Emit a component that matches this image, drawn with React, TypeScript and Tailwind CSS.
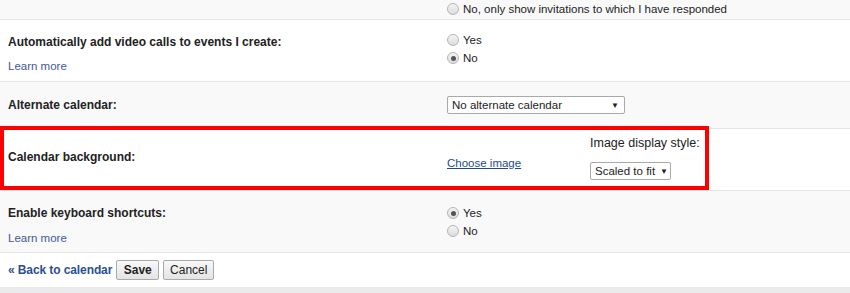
import React from "react";

// Radio dot drawn with spans so it matches the old-Chrome grey radios.
const Radio = ({ checked, label }: { checked?: boolean; label: string }) => (
  <div className="flex items-center h-[18px]">
    <span className="relative flex items-center justify-center w-[12px] h-[12px] rounded-full border border-[#b5b5b5] bg-gradient-to-b from-[#f4f4f4] to-[#dcdcdc] mr-[4px]">
      {checked && <span className="w-[5px] h-[5px] rounded-full bg-[#555]" />}
    </span>
    <span className="whitespace-nowrap">{label}</span>
  </div>
);

const Select = ({ text, className }: { text: string; className?: string }) => (
  <div
    className={
      "flex items-center justify-between h-[18px] border border-[#a9a9a9] rounded-[2px] bg-white pl-[4px] pr-[5px] whitespace-nowrap " +
      (className ?? "")
    }
  >
    <span>{text}</span>
    <span className="text-[8px] ml-[5px]">▼</span>
  </div>
);

export default function App() {
  return (
    <div className="w-[850px] h-[293px] overflow-hidden bg-white text-[11.5px] leading-[15px] text-[#222] font-['Liberation_Sans',Arial,sans-serif]">
      {/* Previous row, cut off at top */}
      <div className="h-[20px] overflow-hidden bg-[#f9f9f9] border-b border-[#e5e5e5] grid grid-cols-[439px_1fr] px-2 items-end">
        <div />
        <div className="pb-[11px]">
          <Radio label="No, only show invitations to which I have responded" />
        </div>
      </div>

      {/* Video calls */}
      <div className="h-[62px] border-b border-[#e5e5e5] grid grid-cols-[439px_1fr] px-2">
        <div className="pt-[15px]">
          <div className="font-bold text-[12px]">Automatically add video calls to events I create:</div>
          <div className="mt-[9px] text-[#44589a]">Learn more</div>
        </div>
        <div className="pt-[11px]">
          <Radio label="Yes" />
          <Radio checked label="No" />
        </div>
      </div>

      {/* Alternate calendar */}
      <div className="h-[47px] bg-[#f9f9f9] border-b border-[#e5e5e5] grid grid-cols-[439px_1fr] px-2 items-center">
        <div className="font-bold text-[12px]">Alternate calendar:</div>
        <Select text="No alternate calendar" className="w-[178px]" />
      </div>

      {/* Calendar background */}
      <div className="relative h-[62px] border-b border-[#e5e5e5] grid grid-cols-[439px_143px_1fr] px-2">
        <div className="pt-[21px] font-bold text-[12px]">Calendar background:</div>
        <div className="pt-[27px]">
          <span className="underline text-[#1f4a8c]">Choose image</span>
        </div>
        <div className="pt-[7px]">
          <div className="text-[12.5px]">Image display style:</div>
          <Select text="Scaled to fit" className="w-[81px] mt-[11px]" />
        </div>
        <div className="absolute left-0 top-[-3px] w-[709px] h-[64px] border-4 border-[#f00] pointer-events-none" />
      </div>

      {/* Keyboard shortcuts */}
      <div className="h-[62px] bg-[#f9f9f9] border-b border-[#e5e5e5] grid grid-cols-[439px_1fr] px-2">
        <div className="pt-[15px]">
          <div className="font-bold text-[12px]">Enable keyboard shortcuts:</div>
          <div className="mt-[10px] text-[#44589a]">Learn more</div>
        </div>
        <div className="pt-[13px]">
          <Radio checked label="Yes" />
          <Radio label="No" />
        </div>
      </div>

      {/* Footer actions */}
      <div className="h-[34px] flex items-center px-2 gap-[4px]">
        <span className="font-bold text-[12px] text-[#2a4f93] tracking-[-0.1px]">« Back to calendar</span>
        <button className="w-[43px] h-[20px] border border-[#aaa] rounded-[2px] bg-gradient-to-b from-[#f8f8f8] to-[#e4e4e4] font-bold text-[12px] text-[#222]">
          Save
        </button>
        <button className="w-[51px] h-[20px] border border-[#aaa] rounded-[2px] bg-gradient-to-b from-[#f8f8f8] to-[#e4e4e4] text-[12px] text-[#222]">
          Cancel
        </button>
      </div>
      <div className="h-[6px] bg-[#ebebeb]" />
    </div>
  );
}
